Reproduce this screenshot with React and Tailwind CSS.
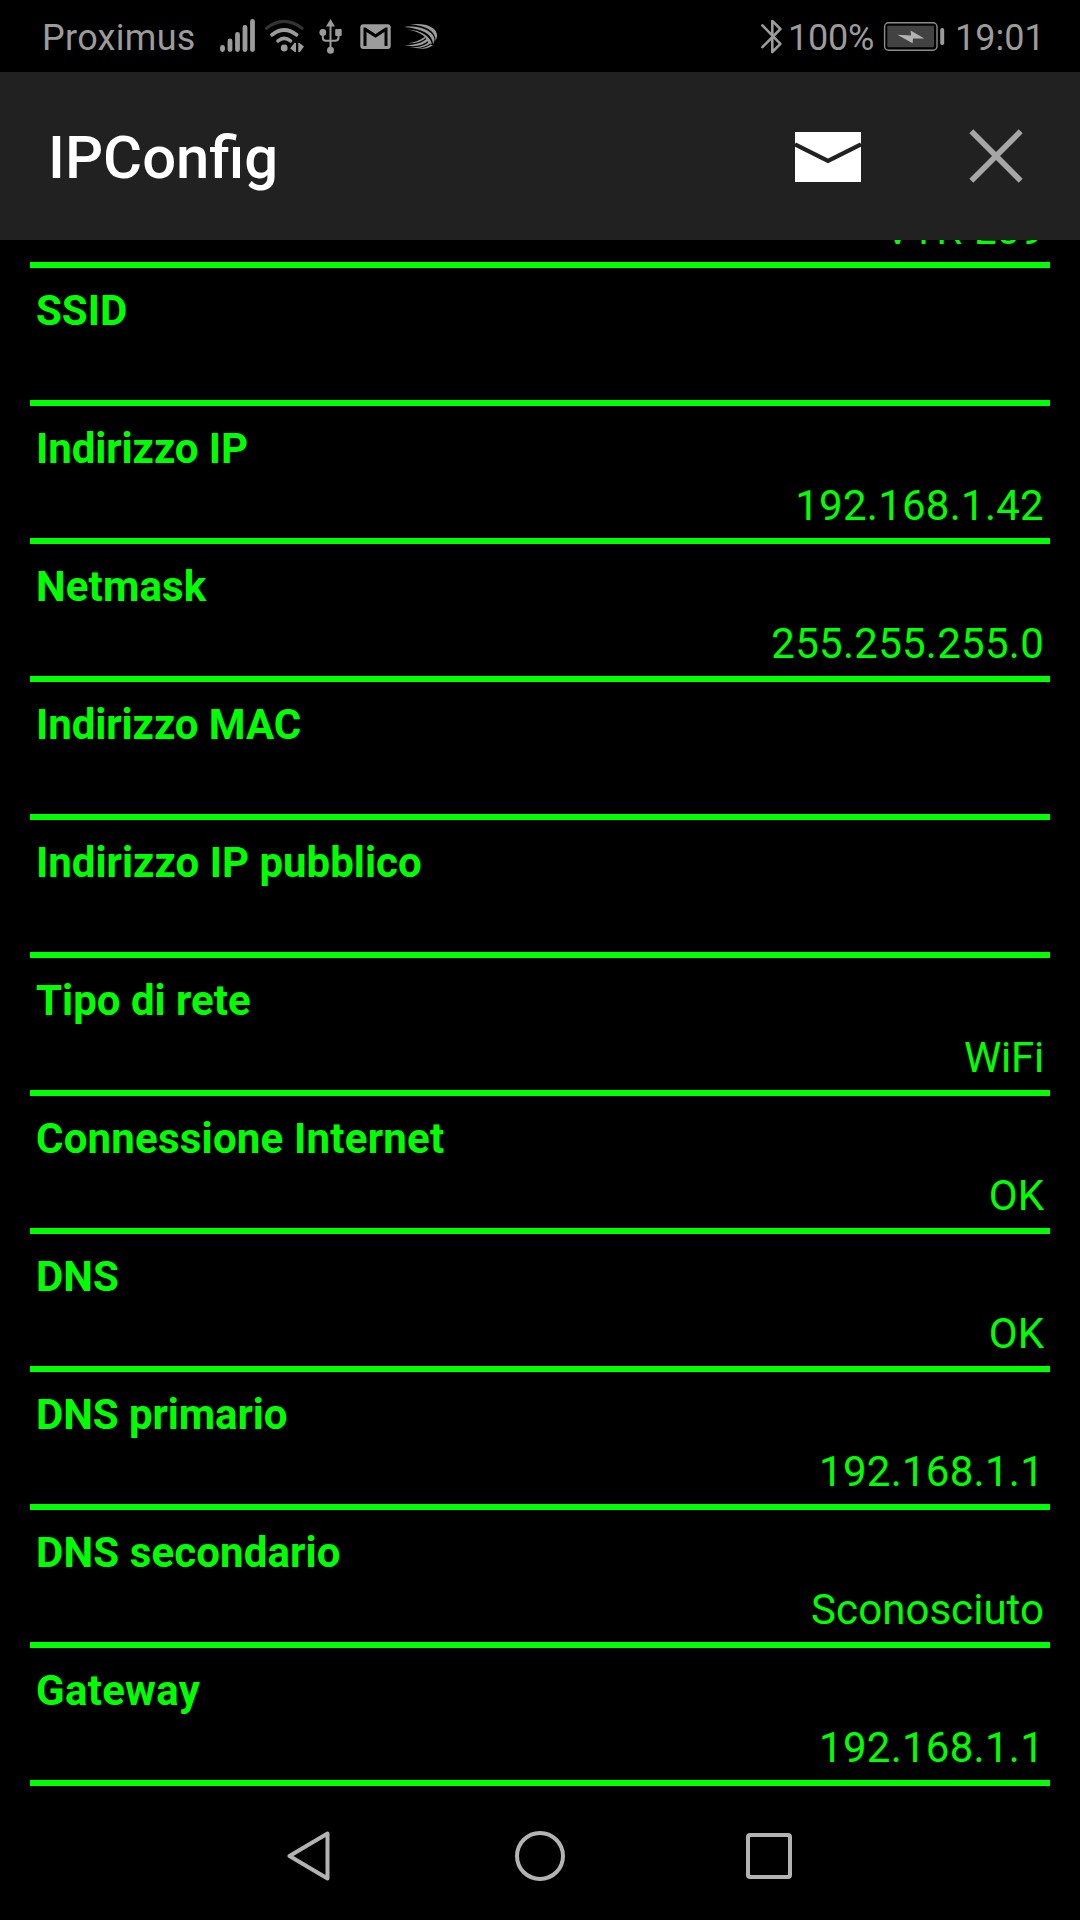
const ROWS = [
  { label: "", value: "VTR-L09", valueClass: "tracking-[0.1px]" },
  { label: "SSID", value: "" },
  { label: "Indirizzo IP", value: "192.168.1.42", labelClass: "tracking-[-0.08px]", valueClass: "tracking-[0.26px]" },
  { label: "Netmask", value: "255.255.255.0", labelClass: "tracking-[0.14px]", valueClass: "tracking-[0.26px]" },
  { label: "Indirizzo MAC", value: "", labelClass: "tracking-[-0.08px]" },
  { label: "Indirizzo IP pubblico", value: "" },
  { label: "Tipo di rete", value: "WiFi", valueClass: "tracking-[-0.25px]" },
  { label: "Connessione Internet", value: "OK", labelClass: "tracking-[0.21px]" },
  { label: "DNS", value: "OK" },
  { label: "DNS primario", value: "192.168.1.1", labelClass: "tracking-[-0.08px]", valueClass: "tracking-[0.26px]" },
  { label: "DNS secondario", value: "Sconosciuto", labelClass: "tracking-[0.12px]", valueClass: "tracking-[0.05px]" },
  { label: "Gateway", value: "192.168.1.1", labelClass: "tracking-[0.28px]", valueClass: "tracking-[0.26px]" },
];

function SignalIcon() {
  return (
    <svg className="ml-[25px] h-[72px] w-[36px]" viewBox="220 0 36 72" stroke="#9b9b9b" strokeWidth="4.8" strokeLinecap="round">
      <path d="M222.5 47.4V49.6M230 41V49.6M237.5 34.4V49.6M245 27.4V49.6M252.5 21.4V49.6" />
    </svg>
  );
}

function WifiIcon() {
  return (
    <svg className="ml-[8px] h-[72px] w-[41px]" viewBox="264 0 41 72" fill="none" strokeLinecap="round">
      <path d="M266.5 28.3Q284 14.5 302 28.3" stroke="#333" strokeWidth="3.2" />
      <path d="M272 34.7Q284.2 25.3 296.5 34.7" stroke="#9b9b9b" strokeWidth="3.8" />
      <path d="M278 40.8Q284.2 35.8 290.5 40.8" stroke="#9b9b9b" strokeWidth="3.6" />
      <circle cx="284.2" cy="48" r="3.4" fill="#9b9b9b" />
      <path d="M294.2 43H296V52H294.8L290.2 48.5ZM298.3 43H299.5L304 46.5L300 52H298.3Z" fill="#9b9b9b" />
    </svg>
  );
}

function UsbIcon() {
  return (
    <svg className="ml-[14px] h-[72px] w-[24px]" viewBox="319 0 24 72" fill="none">
      <path d="M330.5 25V50M322.8 34V37.5Q322.8 40.8 326 40.8H335Q338.5 40.8 338.5 37.5V34" stroke="#9b9b9b" strokeWidth="2" />
      <path d="M330.5 19L335 26.5H326Z" fill="#9b9b9b" />
      <circle cx="322.8" cy="32.5" r="3.4" fill="#9b9b9b" />
      <rect x="335.2" y="29" width="6.5" height="7" rx="1" fill="#9b9b9b" />
      <circle cx="330.5" cy="50.2" r="3.5" fill="#9b9b9b" />
    </svg>
  );
}

function MailAppIcon() {
  return (
    <svg className="ml-[17px] h-[72px] w-[31px]" viewBox="360 0 31 72" fill="none">
      <rect x="360.3" y="24.2" width="30.4" height="24.8" rx="3" fill="#9b9b9b" />
      <path d="M363.5 46V27.5H365.5L375.5 34L385.5 27.5H387.5V46H384.5V32L375.500 37.8L366.5 32V46Z" fill="#000" />
    </svg>
  );
}

function SwiftIcon() {
  return (
    <svg className="ml-[13px] h-[72px] w-[34px]" viewBox="404 0 34 72" fill="#9b9b9b">
      <path d="M410 24.6C425 22.5 437 27 437.2 36L435.7 41C435.5 31 426 25.5 410 24.6Z" />
      <path d="M404 27C420 25 434 31 434.6 40L433.2 44C432 34 422 28.5 404 27Z" />
      <path d="M407 29.5C421 30 430 36 432 44L428.5 43C426 35 418 31.5 407 29.5Z" />
      <path d="M404.5 45C414 45.5 422 43 427 38.5L429 40C423 46 413 47.5 404.5 45Z" />
      <path d="M409 47.3C418 48 425 45.5 429.5 41.5L431 43C425 48 417 49 409 47.3Z" />
      <path d="M416 48.8C423 48.8 427 47 430.5 44.5L433 45.5C428 48.7 422 49.6 416 48.8Z" />
      <path d="M408 43.2C414 42.5 420 40.5 424.5 37L426 38C421 42 414 44 408 43.2Z" />
    </svg>
  );
}

function BluetoothIcon() {
  return (
    <svg className="h-[72px] w-[23px]" viewBox="760 0 23 72" fill="none" stroke="#9b9b9b" strokeWidth="2.6" strokeLinecap="round" strokeLinejoin="round">
      <path d="M762.4 25.4L780.4 43.8L772.3 52V21L780.4 29L762.4 47.2" />
    </svg>
  );
}

function BatteryIcon() {
  return (
    <svg className="h-[72px] w-[62px]" viewBox="883 0 62 72" fill="none">
      <rect x="884.6" y="22.8" width="52.4" height="27.4" rx="4" stroke="#8d8d8d" strokeWidth="1.4" />
      <rect x="887.3" y="25.8" width="46.7" height="21.4" rx="1" fill="#424242" />
      <path d="M897.3 34.7L911 35.4L910.6 30.5L924.3 38.5L913 38.5L912.6 43.3Z" fill="#b3b3b3" />
      <rect x="940.2" y="28" width="4" height="17" rx="1.8" fill="#9b9b9b" />
    </svg>
  );
}

function StatusBar() {
  return (
    <div className="flex h-[72px] shrink-0 items-start pl-[42px] text-[36px] leading-[76px] text-[#9b9b9b]">
      <span className="w-[153px] whitespace-nowrap tracking-[0.3px]">Proximus</span>
      <SignalIcon />
      <WifiIcon />
      <UsbIcon />
      <MailAppIcon />
      <SwiftIcon />
      <div className="ml-auto flex w-[320px] items-start">
        <BluetoothIcon />
        <span className="ml-[5px] w-[95px] whitespace-nowrap tracking-[-0.2px]">100%</span>
        <BatteryIcon />
        <span className="ml-[10px] whitespace-nowrap">19:01</span>
      </div>
    </div>
  );
}

function Header() {
  return (
    <header className="flex h-[168px] shrink-0 items-center bg-[#212121] pl-[48px] pr-[57px]">
      <h1 className="pt-[4px] text-[59.8px] font-medium leading-[72px] text-white">IPConfig</h1>
      <button className="ml-auto pt-[2px]" aria-label="Email">
        <svg className="block h-[50px] w-[66px]" viewBox="0 0 66 50">
          <path d="M0 0H66V50H0Z" fill="#fff" />
          <path d="M0 12.3L33 28.8L66 12.3" fill="none" stroke="#212121" strokeWidth="4.2" />
        </svg>
      </button>
      <button className="ml-[108px]" aria-label="Chiudi">
        <svg className="block size-[54px]" viewBox="0 0 54 54" stroke="#a6a6a6" strokeWidth="5.6">
          <path d="M2.3 2.3L51.7 51.7M51.7 2.3L2.3 51.7" />
        </svg>
      </button>
    </header>
  );
}

function Row({ label, value, labelClass = "", valueClass = "" }) {
  return (
    <li className="h-[138px] border-b-[6px] border-[#00ff00] px-[6px] pt-[14px]">
      <div className={`h-[57px] font-bold ${labelClass}`}>{label}</div>
      <div className={`h-[57px] text-right ${valueClass}`}>{value}</div>
    </li>
  );
}

function NavBar() {
  return (
    <nav className="flex h-[128px] shrink-0 items-center justify-center pr-[2px]">
      <svg className="h-[50px] w-[43px]" viewBox="0 0 43 50" fill="none" stroke="#b3b3b3" strokeWidth="4" strokeLinejoin="round">
        <path d="M40.5 2.5V47.5L2.5 25Z" />
      </svg>
      <div className="ml-[185px] size-[50px] rounded-full border-4 border-[#b3b3b3]" />
      <div className="ml-[181px] size-[46px] rounded-[4px] border-4 border-[#b3b3b3]" />
    </nav>
  );
}

export default function App() {
  return (
    <div className="flex h-[1920px] w-[1080px] flex-col overflow-hidden bg-black font-['Roboto',sans-serif]">
      <StatusBar />
      <Header />
      <main className="h-[1552px] shrink-0 overflow-hidden px-[30px]">
        <ul className="-mt-[110px] text-[42px] leading-[57px] text-[#00ff00]">
          {ROWS.map((row, i) => (
            <Row key={i} {...row} />
          ))}
        </ul>
      </main>
      <NavBar />
    </div>
  );
}
